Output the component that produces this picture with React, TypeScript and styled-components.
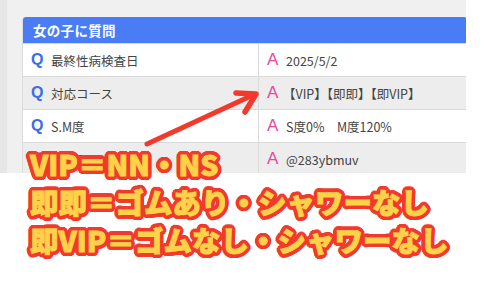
import React from 'react';
import styled, { createGlobalStyle } from 'styled-components';

const GlobalStyle = createGlobalStyle`
  html, body {
    margin: 0;
    padding: 0;
    background: #ffffff;
  }
  body {
    font-family: "Noto Sans CJK JP", "Noto Sans", sans-serif;
  }
`;

const rows = [
  { q: '最終性病検査日', a: '2025/5/2', shaded: false },
  { q: '対応コース', a: '【VIP】【即即】【即VIP】', shaded: true, tight: true },
  { q: 'S.M度', a: 'S度0%\u3000M度120%', shaded: false },
  { q: 'X(旧Twitter)', a: '@283ybmuv', shaded: true },
];

const captions = ['VIP＝NN・NS', '即即＝ゴムあり・シャワーなし', '即VIP＝ゴムなし・シャワーなし'];

// red ring round the yellow letters
const outline = (() => {
  const out: string[] = [];
  for (let i = 0; i < 32; i++) {
    const t = (i / 32) * Math.PI * 2;
    out.push(`${(Math.cos(t) * 3.9).toFixed(2)}px ${(Math.sin(t) * 3.9).toFixed(2)}px 0 #f2392b`);
  }
  return out.join(', ');
})();

export default function App() {
  return (
    <>
      <GlobalStyle />
      <Page>
        <Shot>
          <Edge />
          <Inner>
            <Table>
              <Header>女の子に質問</Header>
              {rows.map((r) => (
                <Row key={r.q} $shaded={r.shaded}>
                  <Cell>
                    <Q>Q</Q>
                    <CellText>{r.q}</CellText>
                  </Cell>
                  <Cell $right>
                    <A>A</A>
                    <CellText $tight={r.tight}>{r.a}</CellText>
                  </Cell>
                </Row>
              ))}
            </Table>
          </Inner>
        </Shot>

        <Arrow width="140" height="80" viewBox="0 0 140 80">
          <path
            d="M10 66 L116 17"
            stroke="#f2392b"
            strokeWidth="5"
            strokeLinecap="round"
            fill="none"
          />
          <path
            d="M99 15 L119 16 L108 34"
            stroke="#f2392b"
            strokeWidth="5.5"
            strokeLinecap="round"
            strokeLinejoin="round"
            fill="none"
          />
        </Arrow>

        <Captions>
          {captions.map((c) => (
            <Caption key={c} style={{ textShadow: outline }}>
              {c}
            </Caption>
          ))}
        </Captions>
      </Page>
    </>
  );
}

const Page = styled.div`
  position: relative;
  width: 500px;
  height: 281px;
  overflow: hidden;
  background: #ffffff;
`;

const Shot = styled.div`
  display: flex;
  width: 466px;
  height: 173px;
  background: #f0f0f0;
  overflow: hidden;
`;

const Edge = styled.div`
  width: 7px;
  flex: none;
  background: #e6e6e6;
`;

const Inner = styled.div`
  flex: 1;
  padding: 17px 0 0 15px;
`;

const Table = styled.div`
  width: 444px;
  border: 1px solid #dcdcdc;
  border-top: none;
  border-radius: 3px 3px 0 0;
  background: #ffffff;
`;

const Header = styled.div`
  height: 26px;
  display: flex;
  align-items: center;
  padding-left: 10px;
  background: #4a7cf6;
  border-radius: 3px 3px 0 0;
  color: #ffffff;
  font-size: 13.5px;
  font-weight: 700;
  letter-spacing: 0.3px;
`;

const Row = styled.div<{ $shaded?: boolean }>`
  display: grid;
  grid-template-columns: 235px 1fr;
  height: 33px;
  background: ${(p) => (p.$shaded ? '#ededed' : '#ffffff')};
  border-top: 1px solid #dadada;
  box-sizing: border-box;
`;

const Cell = styled.div<{ $right?: boolean }>`
  display: flex;
  align-items: center;
  gap: 7px;
  padding-left: 8px;
  border-left: ${(p) => (p.$right ? '1px solid #dadada' : 'none')};
`;

const Q = styled.span`
  color: #3b6ee6;
  font-family: "Liberation Sans", Arial, sans-serif;
  font-weight: 700;
  font-size: 16px;
  width: 13px;
`;

const A = styled.span`
  color: #ea4a9c;
  font-family: "Liberation Sans", Arial, sans-serif;
  font-weight: 400;
  font-size: 17px;
  width: 12px;
`;

const CellText = styled.span<{ $tight?: boolean }>`
  color: #444444;
  font-size: 12.5px;
  margin-left: ${(p) => (p.$tight ? '-3px' : '0')};
`;

const Arrow = styled.svg`
  position: absolute;
  left: 137px;
  top: 78px;
`;

const Captions = styled.div`
  position: absolute;
  left: 30px;
  top: 145px;
  display: flex;
  flex-direction: column;
`;

const Caption = styled.div`
  color: #ffd24a;
  -webkit-text-stroke: 0.9px #ffd24a;
  font-family: "Noto Sans CJK JP", "Noto Sans", sans-serif;
  font-weight: 900;
  font-size: 28.5px;
  line-height: 38px;
  letter-spacing: 0;
  white-space: nowrap;
`;
